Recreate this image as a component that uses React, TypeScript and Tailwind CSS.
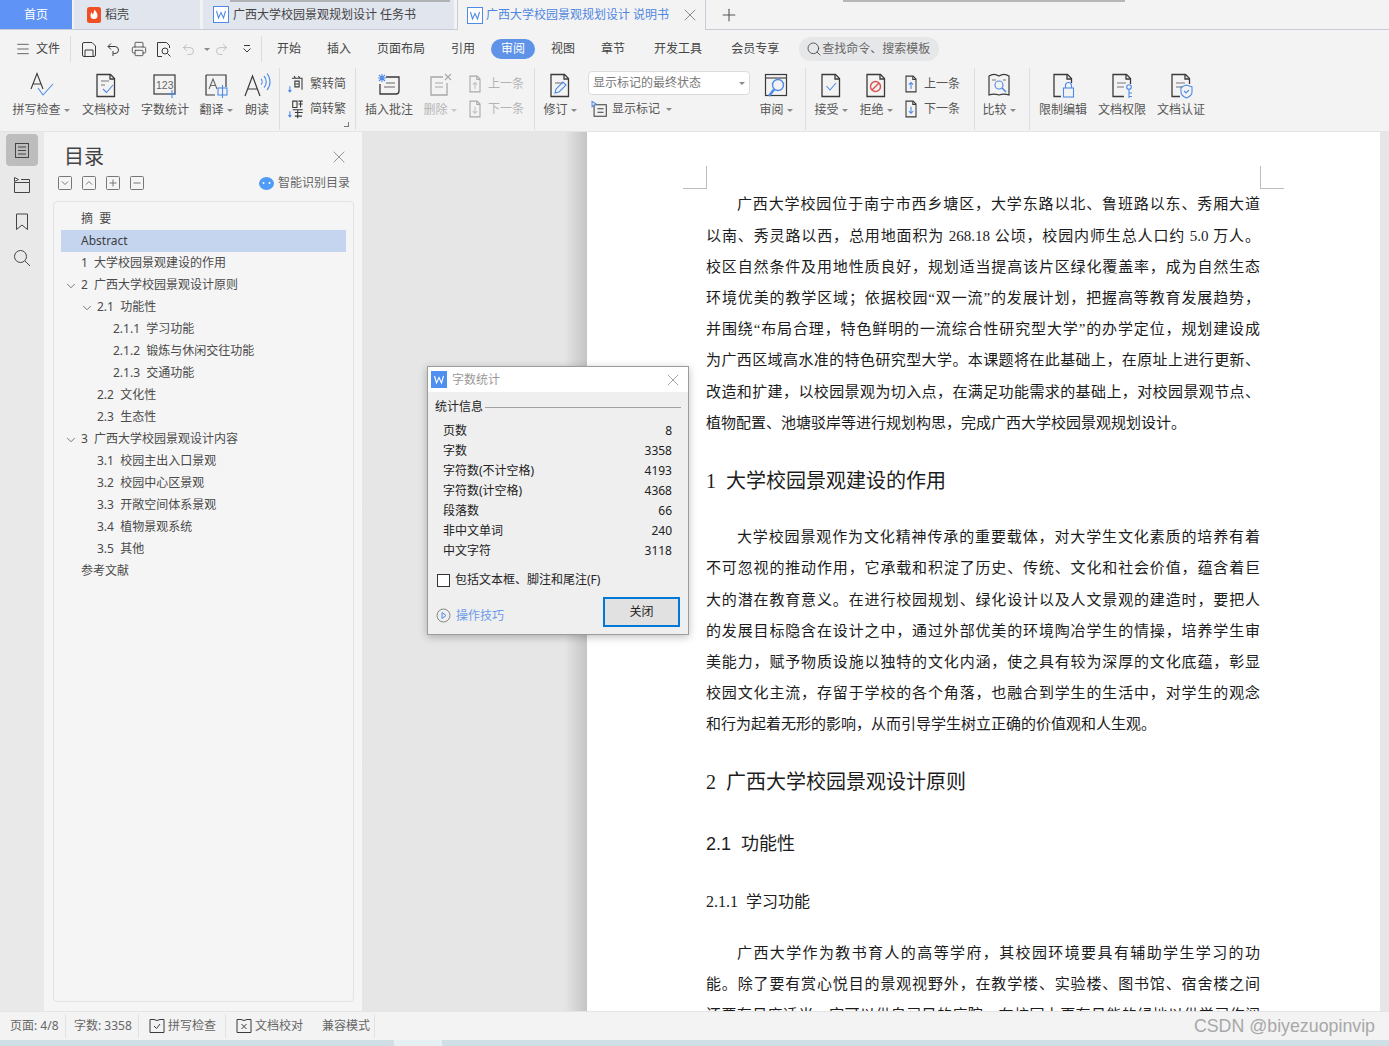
import type { ReactNode } from 'react';
import { ChevronDown, Menu, Plus, Printer, Redo2, Search, Undo2, X } from 'lucide-react';

const INK = '#3a3a3a';
const BLUE = '#4f8ae6';

const tocItems = [
  { text: '摘  要', level: 0 },
  { text: 'Abstract', level: 0, active: true },
  { text: '1  大学校园景观建设的作用', level: 0 },
  { text: '2  广西大学校园景观设计原则', level: 0, open: true },
  { text: '2.1  功能性', level: 1, open: true },
  { text: '2.1.1  学习功能', level: 2 },
  { text: '2.1.2  锻炼与休闲交往功能', level: 2 },
  { text: '2.1.3  交通功能', level: 2 },
  { text: '2.2  文化性', level: 1 },
  { text: '2.3  生态性', level: 1 },
  { text: '3  广西大学校园景观设计内容', level: 0, open: true },
  { text: '3.1  校园主出入口景观', level: 1 },
  { text: '3.2  校园中心区景观', level: 1 },
  { text: '3.3  开敞空间体系景观', level: 1 },
  { text: '3.4  植物景观系统', level: 1 },
  { text: '3.5  其他', level: 1 },
  { text: '参考文献', level: 0 },
];

const stats = [
  ['页数', '8'],
  ['字数', '3358'],
  ['字符数(不计空格)', '4193'],
  ['字符数(计空格)', '4368'],
  ['段落数', '66'],
  ['非中文单词', '240'],
  ['中文字符', '3118'],
];

const para1 = [
  '广西大学校园位于南宁市西乡塘区，大学东路以北、鲁班路以东、秀厢大道',
  '以南、秀灵路以西，总用地面积为 268.18 公顷，校园内师生总人口约 5.0 万人。',
  '校区自然条件及用地性质良好，规划适当提高该片区绿化覆盖率，成为自然生态',
  '环境优美的教学区域；依据校园“双一流”的发展计划，把握高等教育发展趋势，',
  '并围绕“布局合理，特色鲜明的一流综合性研究型大学”的办学定位，规划建设成',
  '为广西区域高水准的特色研究型大学。本课题将在此基础上，在原址上进行更新、',
  '改造和扩建，以校园景观为切入点，在满足功能需求的基础上，对校园景观节点、',
  '植物配置、池塘驳岸等进行规划构思，完成广西大学校园景观规划设计。',
];

const para2 = [
  '大学校园景观作为文化精神传承的重要载体，对大学生文化素质的培养有着',
  '不可忽视的推动作用，它承载和积淀了历史、传统、文化和社会价值，蕴含着巨',
  '大的潜在教育意义。在进行校园规划、绿化设计以及人文景观的建造时，要把人',
  '的发展目标隐含在设计之中，通过外部优美的环境陶冶学生的情操，培养学生审',
  '美能力，赋予物质设施以独特的文化内涵，使之具有较为深厚的文化底蕴，彰显',
  '校园文化主流，存留于学校的各个角落，也融合到学生的生活中，对学生的观念',
  '和行为起着无形的影响，从而引导学生树立正确的价值观和人生观。',
];

const para3 = [
  '广西大学作为教书育人的高等学府，其校园环境要具有辅助学生学习的功',
  '能。除了要有赏心悦目的景观视野外，在教学楼、实验楼、图书馆、宿舍楼之间',
  '还要有日度适当，空可以供自习目的庭院，在校园上更有日能的绿地以供学习作阅',
];

function Paragraph({ lines, lastLeft = true }: { lines: string[]; lastLeft?: boolean }) {
  return (
    <div className="w-[554px] text-[15px] leading-[31.2px] text-[#1c1c1c]">
      {lines.map((line, i) => {
        const isLast = lastLeft && i === lines.length - 1;
        return (
          <div
            key={i}
            className={`h-[31.2px] whitespace-nowrap ${i === 0 ? 'pl-[31px]' : ''} ${isLast ? '' : 'text-justify [text-align-last:justify]'}`}
          >
            {line}
          </div>
        );
      })}
    </div>
  );
}

function Caret() {
  return <span className="ml-[3px] inline-block h-0 w-0 border-x-[3px] border-t-[3px] border-x-transparent border-t-[#8a8a8a] align-middle" />;
}

function Sep() {
  return <div className="mt-[2px] h-[62px] w-px shrink-0 bg-[#dedede]" />;
}

function Icon({ children, size = 28 }: { children: ReactNode; size?: number }) {
  return (
    <svg width={size} height={size} viewBox="0 0 28 28" fill="none" stroke={INK} strokeWidth="1.1" className="shrink-0">
      {children}
    </svg>
  );
}

const doc = 'M5 3.5h13.5l4 4V25.5H5z';
const docFold = 'M18 3.5v4.5h4.5';

function DocLines() {
  return <path d="M9 12h9M9 16h7" stroke="#777" />;
}

function RibbonBtn({ icon, label, className, caret, disabled }: { icon: ReactNode; label: string; className: string; caret?: boolean; disabled?: boolean }) {
  return (
    <div className={`flex shrink-0 flex-col items-center pt-[5px] ${className} ${disabled ? 'opacity-40' : ''}`}>
      <div className="flex h-[28px] items-center justify-center">{icon}</div>
      <div className="mt-[2px] flex h-[18px] items-center justify-center whitespace-nowrap text-[12px] text-[#555]">
        {label}
        {caret && <Caret />}
      </div>
    </div>
  );
}

function SmallRow({ icon, label, disabled }: { icon: ReactNode; label: string; disabled?: boolean }) {
  return (
    <div className={`flex h-[25px] items-center gap-[3px] whitespace-nowrap text-[12px] text-[#555] ${disabled ? 'opacity-40' : ''}`}>
      {icon}
      {label}
    </div>
  );
}

function WordIcon({ solid }: { solid?: boolean }) {
  return (
    <svg width="16" height="17" viewBox="0 0 16 17" className="shrink-0">
      <rect x="0.5" y="0.5" width="15" height="16" fill={solid ? '#4f8ff0' : '#fff'} stroke={solid ? '#4f8ff0' : '#4f8ae6'} />
      <polyline points="3.5,5 5.5,12 8,6.5 10.5,12 12.5,5" fill="none" stroke={solid ? '#fff' : '#4f8ae6'} strokeWidth="1.1" />
    </svg>
  );
}

function NavDoc({ arrow, disabled }: { arrow: 'up' | 'down'; disabled?: boolean }) {
  const color = disabled ? '#777' : BLUE;
  return (
    <Icon size={20}>
      <path d="M7 3h10l4 4v18H7z" strokeWidth="1.5" />
      <path d="M16.5 3v4.5H21" strokeWidth="1.5" />
      {arrow === 'up' ? <path d="M14 21v-9M11 15l3-3 3 3" stroke={color} strokeWidth="1.5" /> : <path d="M14 11v9M11 17l3 3 3-3" stroke={color} strokeWidth="1.5" />}
    </Icon>
  );
}

function Ribbon() {
  return (
    <div className="flex h-[66px] items-start border-b border-[#e4e4e4] bg-[#f3f3f3]">
      <RibbonBtn
        className="ml-[11px] w-[60px]"
        label="拼写检查"
        caret
        icon={
          <Icon>
            <path d="M4 18L10 2.500 16 18M6 13h8" />
            <path d="M11 17l5 7L26 13" stroke={BLUE} />
          </Icon>
        }
      />
      <RibbonBtn
        className="ml-[5px] w-[60px]"
        label="文档校对"
        icon={
          <Icon>
            <path d="M5 3.5h13.5l4 4V25.5H5z" strokeWidth="1.3" />
            <path d={docFold} strokeWidth="1.3" />
            <path d="M9 10h8M9 14h4" stroke="#777" />
            <path d="M11 18l3.5 3.5L21 14" stroke={BLUE} />
          </Icon>
        }
      />
      <RibbonBtn
        className="w-[58px]"
        label="字数统计"
        icon={
          <Icon>
            <rect x="3" y="4" width="21" height="19" strokeWidth="1.2" />
            <text x="5" y="18" fontSize="10.5" fill="#666" stroke="none" fontFamily="Liberation Sans">123</text>
            <path d="M21 19v8M17 23h8" stroke={BLUE} />
          </Icon>
        }
      />
      <RibbonBtn
        className="w-[44px]"
        label="翻译"
        caret
        icon={
          <Icon>
            <path d="M4 4h20v12M4 4v20h9" strokeWidth="1.2" />
            <path d="M7 18l4-10 4 10M8.500 14.500h5" stroke="#666" />
            <rect x="16" y="17" width="9" height="7" stroke={BLUE} />
            <path d="M20.5 14v13" stroke={BLUE} />
          </Icon>
        }
      />
      <RibbonBtn
        className="w-[38px]"
        label="朗读"
        icon={
          <Icon>
            <path d="M2 25L9.500 5l7.500 20M5 18h9" strokeWidth="1.2" />
            <path d="M18 8c1.5 1.5 1.5 4 0 5.5M21 5c3 3 3 8.500 0 11.500M24 2.500c4 4.500 4 12 0 16.500" stroke={BLUE} />
          </Icon>
        }
      />
      <div className="ml-[3px]"><Sep /></div>
      <div className="relative ml-[7px] h-[65px] w-[61px] shrink-0 pt-[5px]">
        <SmallRow
          label="繁转简"
          icon={
            <Icon size={20}>
              <path d="M7 6h14v16M10 3l2 3M16 3l2 3M11 10h6v8h-6zM11 14h6" strokeWidth="1.5" />
              <path d="M4 17v8M2 22.500l2 2.500 2-2.500" stroke={BLUE} strokeWidth="1.5" />
            </Icon>
          }
        />
        <SmallRow
          label="简转繁"
          icon={
            <Icon size={20}>
              <path d="M8 3h6v9H8zM16 3h6M19 3v9M16 7h6M8 15h14M11 19h11M15 15v12M11 24h10" strokeWidth="1.5" />
              <path d="M4 17v8M2 22.500l2 2.500 2-2.500" stroke={BLUE} strokeWidth="1.5" />
            </Icon>
          }
        />
        <span className="absolute bottom-[4px] right-[-1px] h-[5px] w-[5px] border-b border-r border-[#777]" />
      </div>
      <div className="ml-[7px]"><Sep /></div>
      <RibbonBtn
        className="ml-[5px] w-[56px]"
        label="插入批注"
        icon={
          <Icon>
            <path d="M11 6h13v14c0 2-1 3-3 3H5V13" strokeWidth="1.3" />
            <path d="M11 12h9M9 16h11" stroke="#666" />
            <path d="M7 3v8M3 7h8M4 4l6 6M10 4l-6 6" stroke={BLUE} />
          </Icon>
        }
      />
      <RibbonBtn
        className="ml-[3px] w-[40px]"
        label="删除"
        caret
        disabled
        icon={
          <Icon>
            <path d="M17 6H5v18h16V12" strokeWidth="1.3" />
            <path d="M9 12h8M9 16h8" />
            <path d="M19 3l6 6M25 3l-6 6" />
          </Icon>
        }
      />
      <div className="ml-[5px] w-[62px] shrink-0 pt-[5px]">
        <SmallRow label="上一条" disabled icon={<NavDoc arrow="up" disabled />} />
        <SmallRow label="下一条" disabled icon={<NavDoc arrow="down" disabled />} />
      </div>
      <div className="ml-[7px]"><Sep /></div>
      <RibbonBtn
        className="ml-[5px] w-[40px]"
        label="修订"
        caret
        icon={
          <Icon>
            <path d={doc} strokeWidth="1.3" />
            <path d={docFold} strokeWidth="1.3" />
            <path d="M9 12h8" stroke="#777" />
            <path d="M9 22l1-4 7-7 3 3-7 7z" stroke={BLUE} />
          </Icon>
        }
      />
      <div className="ml-[8px] w-[162px] shrink-0 pt-[5px]">
        <div className="flex h-[24px] items-center justify-between rounded-[4px] border border-[#dcdcdc] bg-white pl-[4px] pr-[4px] text-[12px] text-[#777]">
          显示标记的最终状态
          <Caret />
        </div>
        <div className="mt-[2px] flex h-[24px] items-center gap-[3px] pl-[2px] text-[12px] text-[#555]">
          <Icon size={19}>
            <path d="M7 7h17v17H6V7" strokeWidth="1.5" />
            <path d="M11 13h9M11 18h9" strokeWidth="1.5" />
            <path d="M3 2l6 4-6 4z" stroke={BLUE} strokeWidth="1.5" />
          </Icon>
          显示标记
          <Caret />
        </div>
      </div>
      <RibbonBtn
        className="ml-[2px] w-[48px]"
        label="审阅"
        caret
        icon={
          <Icon>
            <rect x="3.500" y="3.500" width="21" height="21" strokeWidth="1.2" />
            <path d="M3.500 7h21" />
            <circle cx="16" cy="14" r="5.500" stroke={BLUE} strokeWidth="1.4" />
            <path d="M12 18.500L7 25" stroke={BLUE} strokeWidth="2.500" />
          </Icon>
        }
      />
      <div className="ml-[5px]"><Sep /></div>
      <RibbonBtn
        className="ml-[4px] w-[42px]"
        label="接受"
        caret
        icon={
          <Icon>
            <path d={doc} strokeWidth="1.3" />
            <path d={docFold} strokeWidth="1.3" />
            <path d="M9.500 15l3.500 4 6-7" stroke={BLUE} />
          </Icon>
        }
      />
      <RibbonBtn
        className="ml-[4px] w-[40px]"
        label="拒绝"
        caret
        icon={
          <Icon>
            <path d={doc} strokeWidth="1.3" />
            <path d={docFold} strokeWidth="1.3" />
            <circle cx="13.500" cy="15.500" r="5" stroke="#d9534f" strokeWidth="1.4" />
            <path d="M10 19l7-7" stroke="#d9534f" strokeWidth="1.4" />
          </Icon>
        }
      />
      <div className="ml-[5px] w-[61px] shrink-0 pt-[5px]">
        <SmallRow label="上一条" icon={<NavDoc arrow="up" />} />
        <SmallRow label="下一条" icon={<NavDoc arrow="down" />} />
      </div>
      <div className="ml-[12px]"><Sep /></div>
      <RibbonBtn
        className="ml-[5px] w-[38px]"
        label="比较"
        caret
        icon={
          <Icon>
            <path d="M14 5c-3-2-7-2-10 0v19c3-1 7-1 10 0 3-1 7-1 10 0V5c-3-2-7-2-10 0z" strokeWidth="1.2" />
            <path d="M7 9h4M18 9h3" stroke="#777" />
            <circle cx="14" cy="14" r="4" stroke={BLUE} />
            <path d="M17 17l4 4" stroke={BLUE} strokeWidth="1.6" />
          </Icon>
        }
      />
      <div className="ml-[11px]"><Sep /></div>
      <RibbonBtn
        className="ml-[6px] w-[54px]"
        label="限制编辑"
        icon={
          <Icon>
            <path d="M12 25.500H5v-22h13.500l4 4V12" strokeWidth="1.3" />
            <path d={docFold} strokeWidth="1.3" />
            <rect x="14.500" y="17" width="10" height="9" stroke={BLUE} />
            <path d="M16.500 17v-2.500a3 3 0 0 1 6 0V17" stroke={BLUE} />
          </Icon>
        }
      />
      <RibbonBtn
        className="ml-[5px] w-[54px]"
        label="文档权限"
        icon={
          <Icon>
            <path d="M16 25.500H5v-22h13.500l4 4V13" strokeWidth="1.3" />
            <path d={docFold} strokeWidth="1.3" />
            <DocLines />
            <circle cx="21" cy="16" r="2.300" stroke={BLUE} />
            <path d="M21 18v9M21 22h3M21 25.500h3" stroke={BLUE} />
          </Icon>
        }
      />
      <RibbonBtn
        className="ml-[5px] w-[54px]"
        label="文档认证"
        icon={
          <Icon>
            <path d="M13 25.500H5v-22h13.500l4 4V13" strokeWidth="1.3" />
            <path d={docFold} strokeWidth="1.3" />
            <DocLines />
            <path d="M14 16l5.500-2 5.500 2v5c0 3-3 5-5.500 6-2.500-1-5.500-3-5.500-6z" stroke={BLUE} />
            <path d="M17 20l2 2 3-3" stroke={BLUE} />
          </Icon>
        }
      />
    </div>
  );
}

function MenuRow() {
  const quickBtn = 'flex h-[24px] w-[25px] shrink-0 items-center justify-center';
  return (
    <div className="flex h-[36px] items-center bg-[#f3f3f3] pt-[2px] text-[12px] text-[#444]">
      <Menu size={16} strokeWidth={1.2} className="ml-[15px] shrink-0" />
      <span className="ml-[5px] w-[34px] shrink-0">文件</span>
      <div className="h-[26px] w-px shrink-0 bg-[#dcdcdc]" />
      <div className="ml-[5px] flex items-center">
        <div className={quickBtn}>
          <svg width="16" height="17" viewBox="0 0 16 17" fill="none" stroke={INK}>
            <path d="M1.500 3a1.500 1.500 0 0 1 1.500-1.500h8L14.500 5v9a1.500 1.500 0 0 1-1.500 1.500H3A1.500 1.500 0 0 1 1.500 14zM4 15.500V9h8v6.500" />
          </svg>
        </div>
        <div className={quickBtn}>
          <svg width="16" height="17" viewBox="0 0 16 17" fill="none" stroke={INK}>
            <path d="M5 2.500l-3 3 3 3M2 5.500h7a3.500 3.500 0 0 1 0 7H7.500M7 10v5" />
          </svg>
        </div>
        <div className={quickBtn}><Printer size={16} strokeWidth={1.2} color={INK} /></div>
        <div className={quickBtn}>
          <svg width="16" height="17" viewBox="0 0 16 17" fill="none" stroke={INK}>
            <path d="M6 15.500H1.500v-14h9l3 3V7" />
            <circle cx="9" cy="10" r="3" />
            <path d="M11.500 12.500l3 3" />
          </svg>
        </div>
        <div className={quickBtn}><Undo2 size={15} strokeWidth={1.1} color="#aaa" /></div>
        <div className="flex w-[8px] shrink-0 justify-center"><Caret /></div>
        <div className={quickBtn}><Redo2 size={15} strokeWidth={1.1} color="#aaa" /></div>
        <div className="ml-[1px] flex h-[24px] w-[26px] shrink-0 items-center justify-center pr-[2px]">
          <svg width="10" height="10" viewBox="0 0 10 10" fill="none" stroke={INK}>
            <path d="M2 1.500h6M1.500 4.500L5 8l3.500-3.500" />
          </svg>
        </div>
      </div>
      <div className="h-[26px] w-px shrink-0 bg-[#dcdcdc]" />
      <div className="ml-[15px] flex items-center gap-[26px] whitespace-nowrap">
        <span>开始</span>
        <span>插入</span>
        <span>页面布局</span>
        <span>引用</span>
        <span className="-mx-[10px] flex h-[20px] items-center rounded-full bg-[#5f93e8] px-[10px] text-white">审阅</span>
        <span>视图</span>
        <span>章节</span>
        <span className="ml-[3px]">开发工具</span>
        <span className="ml-[3px]">会员专享</span>
      </div>
      <div className="ml-[20px] flex h-[24px] w-[140px] shrink-0 items-center rounded-full bg-[#e6e7e9] pl-[7px] text-[#666]">
        <Search size={16} strokeWidth={1.3} color="#444" className="shrink-0" />
        <span className="whitespace-nowrap">查找命令、搜索模板</span>
      </div>
    </div>
  );
}

function TabBar() {
  return (
    <div className="relative flex h-[30px] border-b border-[#c8cad8] bg-[#f3f3f3] text-[12px]">
      <div className="flex h-[29px] w-[72px] items-center justify-center bg-[#5f93f5] text-white">首页</div>
      <div className="ml-[2px] flex h-[29px] w-[126px] items-center gap-[4px] bg-[#e1e5ee] pl-[13px] text-[#444]">
        <svg width="14" height="16" viewBox="0 0 14 16">
          <rect width="14" height="16" rx="2.500" fill="#f04e23" />
          <path d="M7.500 2.500c1 2 3 3 3 6a3.500 3.500 0 0 1-7 0c0-1.500.5-2.500 1.500-3.500 0 1.500.5 2 1 2.500.5-1.500 1-3 1.500-5z" fill="#fff" />
        </svg>
        稻壳
      </div>
      <div className="ml-[3px] flex h-[29px] w-[251px] items-center gap-[4px] bg-[#e1e5ee] pl-[10px] whitespace-nowrap text-[#444]">
        <WordIcon />
        广西大学校园景观规划设计 任务书
      </div>
      <div className="relative z-10 ml-[3px] flex h-[30px] w-[249px] items-center gap-[3px] border-x border-[#c8cad8] bg-[#f3f3f3] pl-[9px] whitespace-nowrap text-[#4f87e0]">
        <WordIcon />
        广西大学校园景观规划设计 说明书
        <X size={20} strokeWidth={0.9} color="#666" className="ml-[8px]" />
      </div>
      <div className="ml-[13px] flex h-[29px] items-center">
        <Plus size={20} strokeWidth={1.3} color="#555" />
      </div>
      <div className="absolute left-[230px] top-0 h-[2px] w-[220px] bg-[#8f8f8f] opacity-60" />
      <div className="absolute left-[843px] top-0 h-[2px] w-[282px] bg-[#8f8f8f] opacity-60" />
    </div>
  );
}

function SideRail() {
  return (
    <div className="flex w-[44px] shrink-0 flex-col items-center bg-[#e9e9e9] pt-[2px]">
      <div className="flex h-[32px] w-[32px] items-center justify-center rounded-[4px] bg-[#bdbdbd]">
        <svg width="16" height="17" viewBox="0 0 16 17" fill="none" stroke="#444">
          <rect x="1.500" y="1.500" width="13" height="14" />
          <path d="M4 5h8M4 8.500h8M4 12h8" />
        </svg>
      </div>
      <svg width="18" height="18" viewBox="0 0 18 18" fill="none" stroke="#444" className="mt-[10px]">
        <path d="M1.500 6.500v10h15v-10zM8 3.500h8.500v3" />
        <path d="M1.500 1.500l4 2-4 2z" fill="#fff" />
      </svg>
      <svg width="14" height="18" viewBox="0 0 14 18" fill="none" stroke="#444" className="mt-[19px]">
        <path d="M1.500 1v15.500L7 12l5.500 4.500V1z" />
      </svg>
      <svg width="18" height="18" viewBox="0 0 18 18" fill="none" stroke="#444" className="mt-[18px]">
        <circle cx="7.500" cy="7.500" r="6" />
        <path d="M12 12l5 5" />
      </svg>
    </div>
  );
}

function MiniButton({ d }: { d: string }) {
  return (
    <svg width="14" height="14" viewBox="0 0 14 14" fill="none" stroke="#777" className="shrink-0">
      <rect x="0.500" y="0.500" width="13" height="13" rx="1" />
      <path d={d} />
    </svg>
  );
}

function TocPanel() {
  return (
    <div className="flex w-[318px] shrink-0 flex-col bg-[#f5f5f5] pb-[9px]">
      <div className="flex h-[44px] items-center justify-between pl-[20px] pr-[13px] pt-[6px]">
        <span className="text-[20px] text-[#444]">目录</span>
        <X size={20} strokeWidth={0.8} color="#666" />
      </div>
      <div className="flex h-[14px] items-center pl-[14px] pr-[12px]">
        <div className="flex gap-[10px]">
          <MiniButton d="M4 5.500l3 3 3-3" />
          <MiniButton d="M4 8.500l3-3 3 3" />
          <MiniButton d="M3.500 7h7M7 3.500v7" />
          <MiniButton d="M3.500 7h7" />
        </div>
        <div className="ml-auto flex items-center gap-[4px] text-[12px] text-[#666]">
          <svg width="15" height="13" viewBox="0 0 15 13">
            <ellipse cx="7.500" cy="6.500" rx="7.500" ry="6.500" fill="#4f9bf5" />
            <circle cx="4.500" cy="6" r="1" fill="#fff" />
            <circle cx="10.500" cy="6" r="1" fill="#fff" />
          </svg>
          智能识别目录
        </div>
      </div>
      <div className="ml-[9px] mr-[8px] mt-[11px] flex-1 rounded-[4px] border border-[#e2e2e2] pl-[7px] pr-[7px] pt-[6px]">
        {tocItems.map((item) => (
          <div
            key={item.text}
            className={`relative flex h-[22px] items-center whitespace-pre text-[12px] ${item.active ? 'bg-[#c5d5f0] text-[#3d3d3d]' : 'text-[#4a4a4a]'} ${item.level === 0 ? 'pl-[20px]' : item.level === 1 ? 'pl-[36px]' : 'pl-[52px]'}`}
          >
            {item.open && (
              <ChevronDown
                size={14}
                strokeWidth={1.2}
                color="#444"
                className={`absolute top-[5px] ${item.level === 0 ? 'left-[3px]' : 'left-[19px]'}`}
              />
            )}
            {item.text}
          </div>
        ))}
      </div>
    </div>
  );
}

function DocumentPage() {
  return (
    <div className="relative w-[793px] shrink-0 overflow-hidden bg-white pl-[119px] pt-[57.400px] [font-family:'Liberation_Serif','Noto_Sans_CJK_SC',serif]">
      <span className="absolute left-[96px] top-[34px] h-[23px] w-[24px] border-b border-r border-[#bdbdbd]" />
      <span className="absolute left-[673px] top-[34px] h-[23px] w-[24px] border-b border-l border-[#bdbdbd]" />
      <Paragraph lines={para1} />
      <div className="mt-[26px] flex h-[32px] items-center whitespace-pre text-[20px] text-[#1c1c1c]">1  大学校园景观建设的作用</div>
      <div className="mt-[25.400px]">
        <Paragraph lines={para2} />
      </div>
      <div className="mt-[25px] flex h-[32px] items-center whitespace-pre text-[20px] text-[#1c1c1c]">2  广西大学校园景观设计原则</div>
      <div className="mt-[31px] flex h-[32px] items-center whitespace-pre text-[18px] text-[#1c1c1c] [font-family:'Liberation_Sans','Noto_Sans_CJK_SC',sans-serif]">2.1  功能性</div>
      <div className="mt-[25px] flex h-[32px] items-center whitespace-pre text-[16px] text-[#1c1c1c]">2.1.1  学习功能</div>
      <div className="mt-[20.400px]">
        <Paragraph lines={para3} lastLeft={false} />
      </div>
    </div>
  );
}

function WordCountDialog() {
  return (
    <div className="absolute left-[427px] top-[366px] flex h-[269px] w-[262px] flex-col border border-[#9c9c9c] bg-[#efefef] text-[12px] text-[#222] shadow-[0_2px_8px_rgba(0,0,0,0.25)]">
      <div className="flex h-[25px] shrink-0 items-center bg-white pl-[3px] pr-[5px]">
        <WordIcon solid />
        <span className="ml-[5px] text-[#999]">字数统计</span>
        <X size={20} strokeWidth={0.8} color="#777" className="ml-auto" />
      </div>
      <div className="mt-[7px] flex h-[16px] items-center pl-[7px] pr-[7px]">
        <span>统计信息</span>
        <div className="ml-[2px] h-px flex-1 bg-[#a0a0a0]" />
      </div>
      <div className="mt-[6px] pl-[15px] pr-[16px]">
        {stats.map(([name, value]) => (
          <div key={name} className="flex h-[20px] items-center justify-between">
            <span>{name}</span>
            <span>{value}</span>
          </div>
        ))}
      </div>
      <div className="mt-[11px] flex h-[16px] items-center pl-[9px]">
        <span className="h-[13px] w-[13px] border border-[#333] bg-white" />
        <span className="ml-[5px]">包括文本框、脚注和尾注(F)</span>
      </div>
      <div className="mt-[9px] flex items-center pl-[8px] pr-[8px]">
        <div className="flex items-center pt-[7px]">
          <svg width="15" height="15" viewBox="0 0 15 15" fill="none" stroke="#888">
            <circle cx="7.500" cy="7.500" r="6.500" />
            <path d="M6 4.500l4 3-4 3z" stroke={BLUE} />
          </svg>
          <span className="ml-[5px] text-[#6b9bec]">操作技巧</span>
        </div>
        <div className="ml-auto flex h-[30px] w-[77px] items-center justify-center border-2 border-[#0078d7] bg-[#e1e1e1]">关闭</div>
      </div>
    </div>
  );
}

function StatusBar() {
  const cell = 'flex h-[24px] shrink-0 items-center border-r border-[#e2e2e2]';
  return (
    <div className="flex h-[29px] shrink-0 items-center border-t border-[#e4e4e4] bg-[#f3f3f3] text-[12px] text-[#666]">
      <div className={`${cell} w-[66px] pl-[10px]`}>页面: 4/8</div>
      <div className={`${cell} w-[73px] pl-[8px]`}>字数: 3358</div>
      <div className={`${cell} w-[87px] gap-[3px] pl-[10px]`}>
        <svg width="16" height="16" viewBox="0 0 16 16" fill="none" stroke={INK}>
          <path d="M1 1.500h4l3 1 3-1h4v13H1z" />
          <path d="M5 8l2.500 2.500L11 6" />
        </svg>
        拼写检查
      </div>
      <div className={`${cell} w-[149px] pl-[10px]`}>
        <svg width="16" height="16" viewBox="0 0 16 16" fill="none" stroke={INK} className="mr-[3px]">
          <path d="M1 1.500h4l3 1 3-1h4v13H1z" />
          <path d="M5.500 6l5 5M10.500 6l-5 5" />
        </svg>
        文档校对
        <span className="ml-[19px]">兼容模式</span>
      </div>
      <div className="ml-auto mr-[14px] text-[17.8px] text-[#a8a8a8] [font-family:'Liberation_Sans',sans-serif]">CSDN @biyezuopinvip</div>
    </div>
  );
}

export default function App() {
  return (
    <div className="relative flex h-[1046px] w-[1389px] flex-col overflow-hidden bg-[#f3f3f3] [font-family:'Noto_Sans','Noto_Sans_CJK_SC',sans-serif]">
      <TabBar />
      <MenuRow />
      <Ribbon />
      <div className="flex min-h-0 flex-1">
        <SideRail />
        <TocPanel />
        <div className="w-[225px] shrink-0 bg-gradient-to-r from-[#e6e6e6] from-[90%] to-[#c4c4c4]" />
        <DocumentPage />
        <div className="flex-1 bg-[#e6e6e6]" />
      </div>
      <StatusBar />
      <div className="flex h-[6px] shrink-0 bg-[#cfdfe5]">
        <div className="ml-[394px] w-[48px] bg-[#e6eff2]" />
      </div>
      <WordCountDialog />
    </div>
  );
}
